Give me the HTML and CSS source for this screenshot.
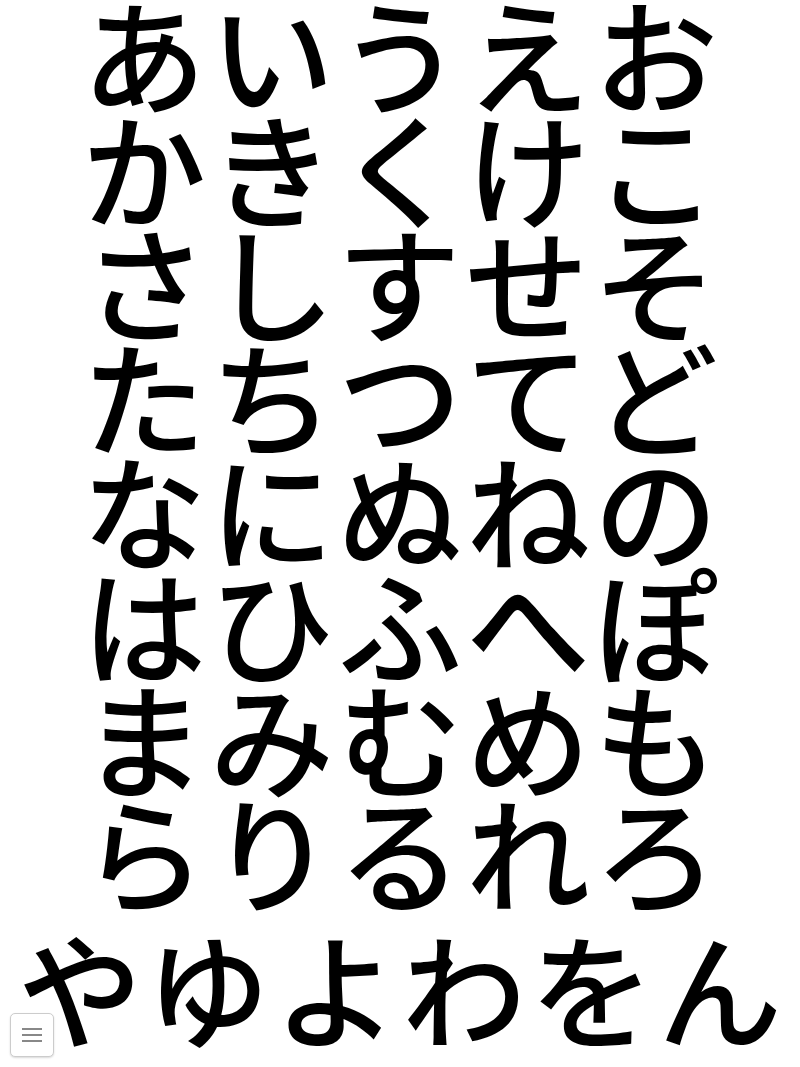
FILE: index.html
```html
<!DOCTYPE html>
<html lang="ja">
<head>
    <meta charset="UTF-8">
    <meta name="viewport" content="width=device-width, initial-scale=1.0">
    <title>ひらがな</title>
    <link rel="stylesheet" href="styles.css">
</head>
<body>
    <div class="kana">
        <div class="row">あいうえお</div>
        <div class="row">かきくけこ</div>
        <div class="row">さしすせそ</div>
        <div class="row">たちつてど</div>
        <div class="row">なにぬねの</div>
        <div class="row">はひふへぽ</div>
        <div class="row">まみむめも</div>
        <div class="row">らりるれろ</div>
        <div class="row row-last">やゆよわをん</div>
    </div>
    <button class="menu-btn" aria-label="menu">
        <span></span><span></span><span></span>
    </button>
</body>
</html>
```

FILE: styles.css
```css
body {
    margin: 0;
    min-height: 100vh;
    background-color: white;
    color: black;
    font-family: "Noto Sans CJK JP", sans-serif;
}
.kana {
    margin-top: -6px;
    padding-bottom: 30px;
}
.row {
    font-size: 124px;
    font-weight: 500;
    line-height: 114px;
    letter-spacing: 4px;
    padding-left: 4px;
    text-align: center;
    white-space: nowrap;
}
.row-last {
    margin-top: 22px;
}
.menu-btn {
    position: fixed;
    left: 10px;
    bottom: 10px;
    width: 44px;
    height: 44px;
    background-color: white;
    border: 1px solid #ccc;
    border-radius: 5px;
    box-shadow: 0 1px 2px rgba(0, 0, 0, 0.15);
    display: flex;
    flex-direction: column;
    justify-content: center;
    align-items: center;
    gap: 4px;
    padding: 0;
    cursor: pointer;
}
.menu-btn span {
    display: block;
    width: 20px;
    height: 2px;
    background-color: #888;
}
```
